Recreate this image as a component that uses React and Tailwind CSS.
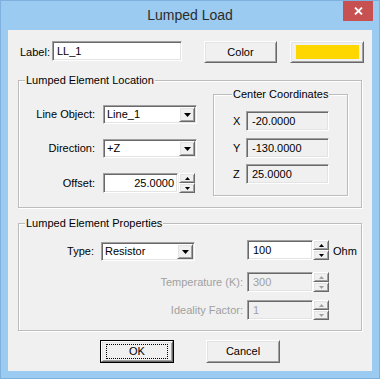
import React from 'react';

// classic win32 3d edges
const sunken = 'border border-t-[#a0a0a0] border-l-[#a0a0a0] border-b-white border-r-white shadow-[inset_1px_1px_0_#696969,inset_-1px_-1px_0_#e3e3e3]';
const raised = 'border border-t-white border-l-white border-b-[#696969] border-r-[#696969] shadow-[inset_1px_1px_0_#e3e3e3,inset_-1px_-1px_0_#a0a0a0]';

const Arrow = ({ up = false, disabled = false, size = 'big' }) => {
    const fill = disabled ? '#a0a0a0' : '#000';
    if (size === 'big') {
        return (
            <svg width="7" height="4" viewBox="0 0 7 4">
                <path d="M0 0h7L3.5 4z" fill={fill} />
            </svg>
        );
    }
    return (
        <svg width="5" height="3" viewBox="0 0 5 3">
            <path d={up ? 'M0 3h5L2.5 0z' : 'M0 0h5L2.5 3z'} fill={fill} />
        </svg>
    );
};

const Combo = ({ value }) => (
    <div className={`flex h-[19px] w-[94px] bg-white p-[1px] ${sunken}`}>
        <span className="flex-1 pl-[2px] leading-[15px] text-black">{value}</span>
        <div className={`flex w-[16px] items-center justify-center bg-[#f0f0f0] ${raised}`}>
            <Arrow />
        </div>
    </div>
);

const Spin = ({ value, inputW, gap = '', align = 'left', disabled = false }) => (
    <div className="flex h-[20px]">
        <div
            className={`flex h-full items-center ${inputW} ${sunken} ${disabled ? 'bg-[#f0f0f0] text-[#a0a0a0]' : 'bg-white text-black'} ${align === 'right' ? 'justify-end pr-[3px]' : 'pl-[5px]'}`}
        >
            {value}
        </div>
        <div className={`flex w-[16px] flex-col ${gap}`}>
            <div className={`flex h-[10px] items-center justify-center bg-[#f0f0f0] ${raised}`}>
                <Arrow up size="small" disabled={disabled} />
            </div>
            <div className={`flex h-[10px] items-center justify-center bg-[#f0f0f0] ${raised}`}>
                <Arrow size="small" disabled={disabled} />
            </div>
        </div>
    </div>
);

const Group = ({ title, legendMl, className = '', children }) => (
    <div className={`border border-[#bcbcbc] shadow-[inset_1px_1px_0_#fff,1px_1px_0_#fff] ${className}`}>
        <div className="-mt-[7px] flex h-[13px]">
            <span className={`bg-[#f0f0f0] px-[1px] leading-[13px] text-black ${legendMl}`}>{title}</span>
        </div>
        {children}
    </div>
);

const Button = ({ label, isDefault = false }) => (
    <div className={`h-[23px] w-[74px] ${isDefault ? 'border border-[#000]' : ''}`}>
        <div className={`flex h-full w-full items-center justify-center bg-[#f0f0f0] ${raised}`}>
            {isDefault ? (
                <span className="flex h-[15px] w-[62px] items-center justify-center border border-dotted border-black text-black">
                    {label}
                </span>
            ) : (
                <span className="text-black">{label}</span>
            )}
        </div>
    </div>
);

const CoordRow = ({ axis, value, className = '' }) => (
    <div className={`flex h-[20px] items-center ${className}`}>
        <span className="w-[13px] text-black">{axis}</span>
        <div className={`flex h-full w-[83px] items-center bg-[#f0f0f0] pl-[5px] text-black ${sunken}`}>{value}</div>
    </div>
);

export default function App() {
    return (
        <div className="flex h-[379px] w-[380px] flex-col border border-[#7fb1de] bg-[#9ccbf2] font-['Liberation_Sans',Arial,sans-serif] text-[11px]">
            {/* title bar */}
            <div className="grid h-[29px] grid-cols-[1fr_auto_1fr]">
                <div />
                <div className="pt-[4px] text-[14px] leading-[20px] text-[#2b2b2b]">Lumped Load</div>
                <div className="flex justify-end pr-[6px]">
                    <div className="flex h-[20px] w-[30px] items-center justify-center bg-[#c75050]">
                        <svg width="9" height="8" viewBox="0 0 9 8">
                            <path d="M1 0.5l7 7M8 0.5l-7 7" stroke="#fff" strokeWidth="1.8" />
                        </svg>
                    </div>
                </div>
            </div>

            {/* client */}
            <div className="mx-[7px] flex h-[341px] flex-col bg-[#f0f0f0]">
                {/* label row */}
                <div className="mt-[11px] flex h-[22px] items-start pl-[12px]">
                    <span className="w-[32px] pt-[3px] text-black">Label:</span>
                    <div className={`flex h-[20px] w-[130px] items-center bg-white pl-[4px] text-black ${sunken}`}>LL_1</div>
                    <div className={`ml-[22px] flex h-[22px] w-[73px] items-center justify-center bg-[#f0f0f0] text-black ${raised}`}>
                        Color
                    </div>
                    <div className={`ml-[13px] flex h-[22px] w-[74px] items-center justify-center bg-[#f0f0f0] ${raised}`}>
                        <div className="h-[14px] w-[63px] bg-[#ffd700]" />
                    </div>
                </div>

                {/* location group */}
                <Group title="Lumped Element Location" legendMl="ml-[6px]" className="ml-[10px] mt-[17px] w-[344px]">
                    <div className="flex items-start pb-[11px]">
                        <div className="mt-[18px] flex flex-col">
                            <div className="flex h-[19px] items-center">
                                <span className="w-[76px] text-right text-black">Line Object:</span>
                                <div className="ml-[8px]"><Combo value="Line_1" /></div>
                            </div>
                            <div className="mt-[15px] flex h-[19px] items-center">
                                <span className="w-[76px] text-right text-black">Direction:</span>
                                <div className="ml-[8px]"><Combo value="+Z" /></div>
                            </div>
                            <div className="mt-[15px] flex h-[20px] items-center">
                                <span className="w-[76px] text-right text-black">Offset:</span>
                                <div className="ml-[8px]">
                                    <Spin value="25.0000" inputW="w-[75px]" gap="ml-[1px]" align="right" />
                                </div>
                            </div>
                        </div>
                        <Group title="Center Coordinates" legendMl="ml-[18px]" className="ml-[16px] mt-[7px] w-[135px]">
                            <div className="flex flex-col pb-[11px] pl-[19px]">
                                <CoordRow axis="X" value="-20.0000" className="mt-[10px]" />
                                <CoordRow axis="Y" value="-130.0000" className="mt-[7px]" />
                                <CoordRow axis="Z" value="25.0000" className="mt-[6px]" />
                            </div>
                        </Group>
                    </div>
                </Group>

                {/* properties group */}
                <Group title="Lumped Element Properties" legendMl="ml-[6px]" className="ml-[10px] mt-[15px] w-[344px]">
                    <div className="flex flex-col pb-[10px]">
                        <div className="mt-[10px] flex h-[20px] items-start">
                            <span className="mt-[3px] w-[75px] text-right text-black">Type:</span>
                            <div className="ml-[7px] mt-[2px]"><Combo value="Resistor" /></div>
                            <div className="flex-1" />
                            <Spin value="100" inputW="w-[66px]" />
                            <span className="w-[32px] pl-[4px] pt-[3px] text-black">Ohm</span>
                        </div>
                        <div className="mt-[12px] flex h-[20px] items-center">
                            <span className="flex-1 pr-[4px] text-right text-[#a0a0a0]">Temperature (K):</span>
                            <Spin value="300" inputW="w-[66px]" disabled />
                            <span className="w-[32px]" />
                        </div>
                        <div className="mt-[8px] flex h-[20px] items-center">
                            <span className="flex-1 pr-[4px] text-right text-[#a0a0a0]">Ideality Factor:</span>
                            <Spin value="1" inputW="w-[66px]" disabled />
                            <span className="w-[32px]" />
                        </div>
                    </div>
                </Group>

                {/* buttons */}
                <div className="mt-[9px] flex justify-center gap-[32px]">
                    <Button label="OK" isDefault />
                    <Button label="Cancel" />
                </div>
            </div>
        </div>
    );
}
